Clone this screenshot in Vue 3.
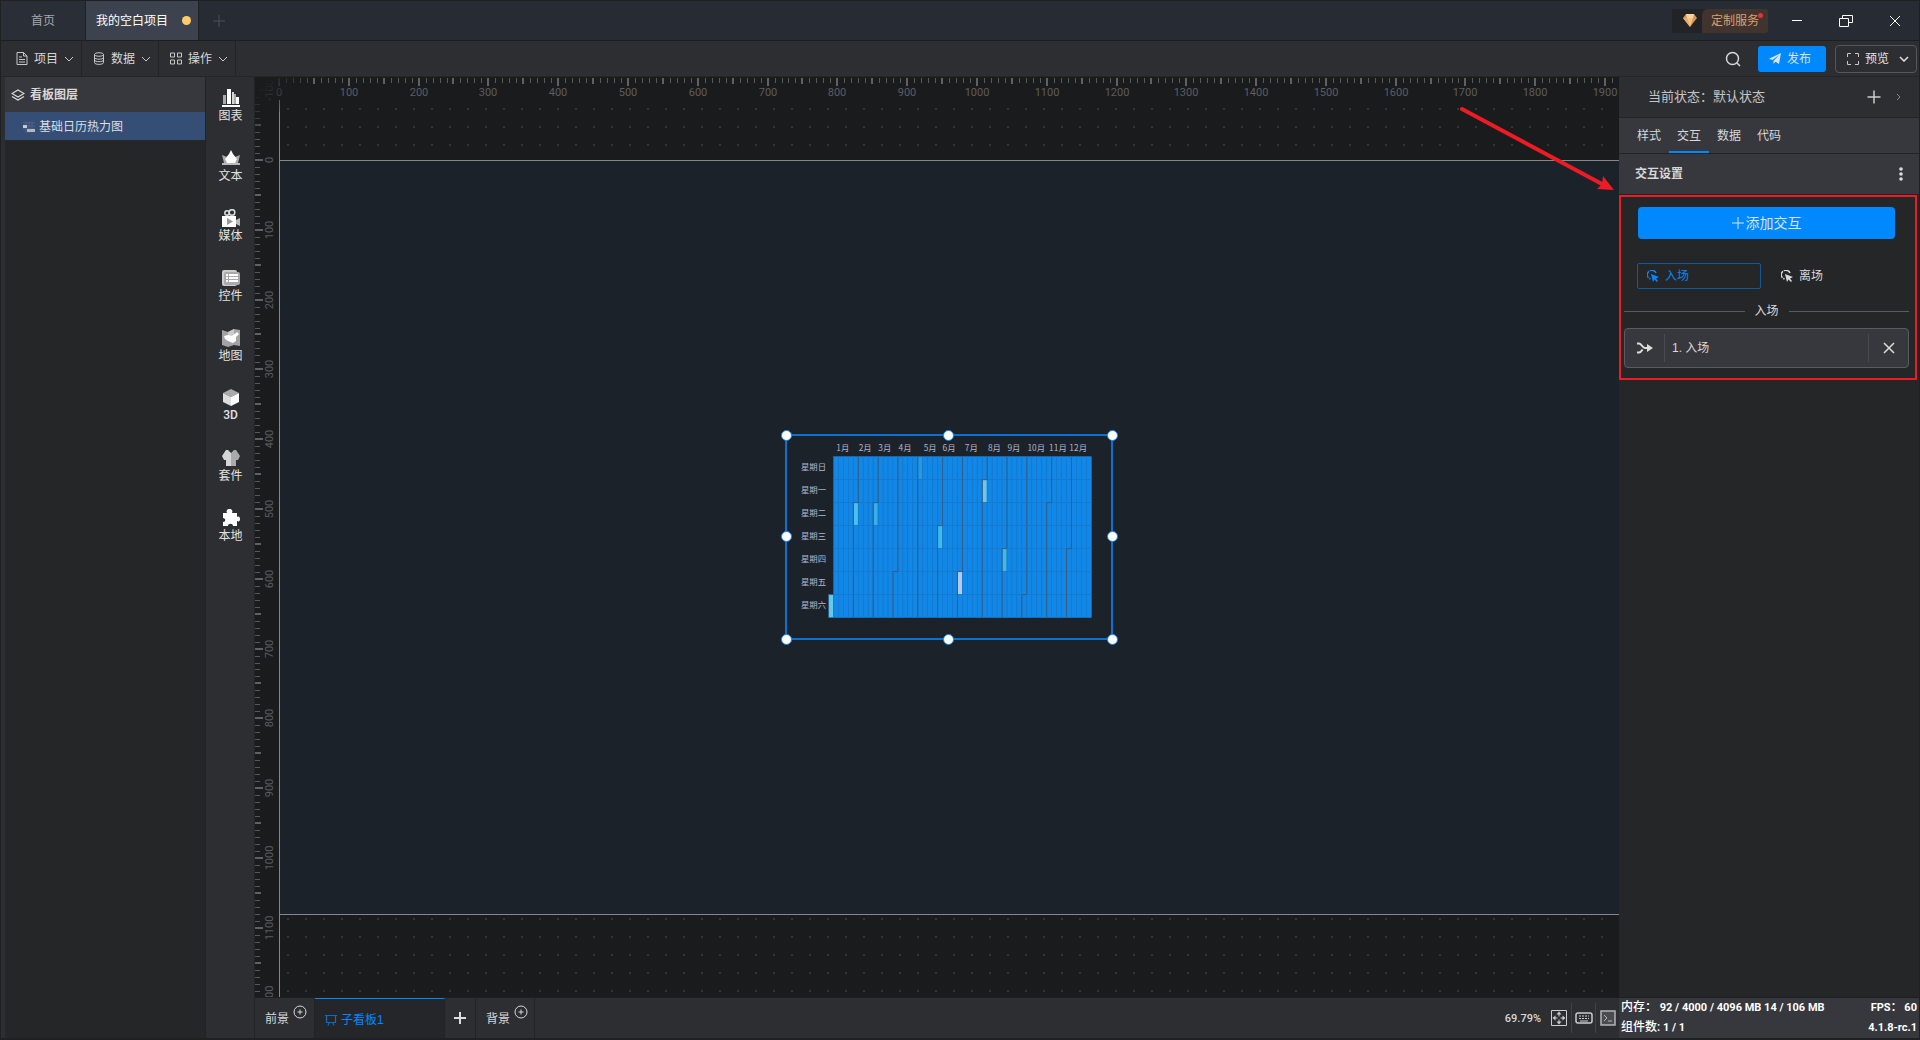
<script setup>
const SCALE = 0.69792
const ORIGIN_X = 24
const ORIGIN_Y = 83

function ticks(from, to, origin) {
  const out = []
  for (let v = from; v <= to; v += 10) {
    out.push({ v, p: Math.round(origin + v * SCALE), size: v % 100 === 0 ? 8 : v % 50 === 0 ? 6 : 5, major: v % 50 === 0 })
  }
  return out
}
const xTicks = ticks(0, 1920, ORIGIN_X)
const yTicks = ticks(-110, 1200, ORIGIN_Y)
const xLabels = xTicks.filter((t) => t.v % 100 === 0)
const yLabels = yTicks.filter((t) => t.v % 100 === 0)

const tools = ['图表', '文本', '媒体', '控件', '地图', '3D', '套件', '本地']
const menus = ['项目', '数据', '操作']
const handles = ['nw', 'n', 'ne', 'w', 'e', 'sw', 's', 'se']

const CW = 7.1
const CH = 32.9
const GX = 59.5
const GY = 29.5
const weekdays = ['星期日', '星期一', '星期二', '星期三', '星期四', '星期五', '星期六']
const hot = { 0: '#62c9ef', 1: '#49c1ee', 2: '#36b0ea', 4: '#2399e6', 5: '#40b9ec', 6: '#b6c9ec', 7: '#70c5ea', 8: '#40b9e6' }

const days = []
const months = []
for (let i = 0; i < 365; i++) {
  const date = new Date(Date.UTC(2022, 0, 1 + i))
  const col = Math.floor((i + 6) / 7)
  const row = (i + 6) % 7
  const x = GX + col * CW
  const y = GY + row * CH
  const m = date.getUTCMonth()
  const first = date.getUTCDate() === 1
  days.push({ x, y, fill: first && hot[m] ? hot[m] : '#1188e8' })
  if (first) {
    const bottom = GY + 7 * CH
    const line = row === 0
      ? `M${x} ${GY}V${bottom}`
      : `M${x + CW} ${GY}V${y}H${x}V${bottom}`
    months.push({ m, line })
  }
}
const labelX = [80, 112, 140, 169, 205, 232, 264, 297, 325, 357, 388, 417]
</script>

<template>
  <div class="app">
    <header class="titlebar">
      <nav class="tabs">
        <button class="tab home">首页</button>
        <button class="tab current">我的空白项目<i class="dirty"></i></button>
        <button class="tab add" aria-label="新建">
          <svg width="14" height="14" viewBox="0 0 14 14"><path d="M7 1v12M1 7h12" stroke="#4b4e56" fill="none" /></svg>
        </button>
      </nav>
      <div class="window">
        <button class="service">
          <span class="gem">
            <svg width="14" height="13" viewBox="0 0 14 13"><path d="M3 0h8l3 4-7 9L0 4z" fill="#d99555" /><path d="M3 0h8l-1 4H4z" fill="#f7d3a0" /><path d="M4 4h6l-3 9z" fill="#f3c388" /><path d="M0 4h4l3 9z" fill="#e8ad6d" /></svg>
          </span>
          <span class="service-text">定制服务<i></i></span>
        </button>
        <button class="win" aria-label="最小化"><svg width="14" height="14" viewBox="0 0 14 14"><path d="M2 6.500h10" /></svg></button>
        <button class="win" aria-label="还原"><svg width="16" height="14" viewBox="0 0 16 14"><path d="M1.500 4.500h9v8h-9zM4.500 4.500v-3h10v7h-4" /></svg></button>
        <button class="win" aria-label="关闭"><svg width="12" height="12" viewBox="0 0 12 12"><path d="M1 1l10 10M11 1L1 11" /></svg></button>
      </div>
    </header>

    <div class="toolbar">
      <button v-for="(name, i) in menus" :key="name" class="menu">
        <svg v-if="i === 0" class="line" width="12" height="13" viewBox="0 0 12 13"><path d="M1 .5h6.500L11 4v8.500H1zM7.500 .5V4H11M3 5h3M3 7.500h6M3 10h6" /></svg>
        <svg v-else-if="i === 1" class="line" width="12" height="13" viewBox="0 0 12 13"><ellipse cx="6" cy="2.500" rx="4.500" ry="1.800" /><path d="M1.500 2.500v8c0 2.500 9 2.500 9 0v-8M1.500 5.500c0 2.200 9 2.200 9 0M1.500 8c0 2.200 9 2.200 9 0" /></svg>
        <svg v-else class="line" width="12" height="13" viewBox="0 0 12 13"><path d="M.5 1h4v4h-4zM7.500 1h4v4h-4zM.5 8h4v4h-4zM7.500 8h4v4h-4z" /></svg>
        <span>{{ name }}</span>
        <svg class="line" width="10" height="6" viewBox="0 0 10 6"><path d="M1 1l4 4 4-4" /></svg>
      </button>
      <div class="actions">
        <button class="icon-btn" aria-label="搜索">
          <svg width="16" height="16" viewBox="0 0 16 16" fill="none" stroke="#d8d8d8" stroke-width="1.500"><circle cx="7.500" cy="7.500" r="6" /><path d="M12 12l3 3" /></svg>
        </button>
        <button class="publish">
          <svg width="12" height="12" viewBox="0 0 12 12"><path d="M12 0L10 11 6.500 8.800 4.500 11V8L10 2 3.500 7 0 5.800z" fill="#d6e4f4" /></svg>
          发布
        </button>
        <button class="preview">
          <svg width="12" height="12" viewBox="0 0 12 12" fill="none" stroke="#c8c8c8"><path d="M.5 4V.5H4M8 .5h3.500V4M11.500 8v3.500H8M4 11.500H.5V8" /></svg>
          <span>预览</span>
          <svg width="10" height="6" viewBox="0 0 10 6" fill="none" stroke="#e0e0e0" stroke-width="1.500"><path d="M1 1l4 4 4-4" /></svg>
        </button>
      </div>
    </div>

    <div class="body">
      <aside class="layers">
        <h2>
          <svg width="14" height="12" viewBox="0 0 14 12" fill="none" stroke="#ddd"><path d="M7 1l6 3.500L7 8 1 4.500zM1 7.500L7 11l6-3.500" stroke-width="1.200" /></svg>
          看板图层
        </h2>
        <button class="layer">
          <svg width="12" height="12" viewBox="0 0 12 12"><path d="M0 2h12M0 5h12M0 8h12M3 0v12M6 0v12M9 0v12" stroke="#4c6288" /><path d="M0 4h4v3H0z" fill="#c8cbd1" /><path d="M4 8h8v3H4z" fill="#b4b7be" /></svg>
          基础日历热力图
        </button>
      </aside>

      <nav class="tools">
        <button v-for="(name, i) in tools" :key="name" class="tool" :class="{ latin: name === '3D' }">
          <svg width="18" height="18" viewBox="0 0 18 18">
            <template v-if="i === 0"><path d="M1 6h3v9H1zM12 5h2v10h-2z" fill="#aaa" /><path d="M5 0h4v15H5zM0 16h18v2H0zM14 8h3v7h-3z" fill="#fff" /><path d="M10 3h2v12h-2z" fill="#d8d8d8" /></template>
            <template v-else-if="i === 1"><path d="M0 6l5 2 2 6H2zM18 6l-5 2-2 6h5z" fill="#aaa" /><path d="M9 1l2 4 4 5-2 4H5l-2-4 4-5z" fill="#fff" /><path d="M0 14h18v2H0z" fill="#bbb" /></template>
            <template v-else-if="i === 2"><g fill="none" stroke="#ddd" stroke-width="1.500"><circle cx="5" cy="4" r="2.200" /><circle cx="10" cy="3.500" r="2.800" /></g><path d="M0 7h14v11H0z" fill="#fff" /><path d="M5 9l6 3.500L5 16z" fill="#999" /><path d="M14 11l4-2v8l-4-2z" fill="#bbb" /></template>
            <template v-else-if="i === 3"><rect y="1" width="15" height="16" rx="2" fill="#ccc" /><rect x="2" y="3" width="16" height="13" rx="2" fill="#aaa" /><path d="M4 5h2v2H4zM7 5h9v2H7zM4 8h2v2H4zM7 8h9v2H7zM4 11h2v2H4zM7 11h9v2H7z" fill="#fff" /></template>
            <template v-else-if="i === 4"><path d="M0 1l6 2 6-3 6 1v16l-6-1-6 2-6-2z" fill="#a3a3a3" /><path d="M6 3l6-3v7H6z" fill="#ccc" /><path d="M2 7l4-1 4 1 5-4 2 2-3 3v4l-3 2-5-2-3-2z" fill="#fff" /></template>
            <template v-else-if="i === 5"><path d="M9 0l8 4-8 4-8-4z" fill="#aaa" /><path d="M1 4l8 4v9l-8-4z" fill="#ddd" /><path d="M17 4L9 8v9l8-4z" fill="#fff" /></template>
            <template v-else-if="i === 6"><path d="M4 1h2l3 3v13H4v-6L2 11 0 7z" fill="#d5d5d5" /><path d="M14 1h-2L9 4v13h5v-6l2 0 2-4z" fill="#aaa" /></template>
            <path v-else d="M1 4h4c-1-2 0-4 2.500-4S11 2 10 4h5v4c2-1 3 0 3 2s-1 3-3 2v5h-4c0-3-5-3-5 0H1v-4c3 0 3-4 0-4z" fill="#fff" />
          </svg>
          <span>{{ name }}</span>
        </button>
      </nav>

      <main class="work">
        <div class="stage">
          <svg class="board" width="100%" height="100%">
            <defs>
              <pattern id="dots" x="32" y="31" width="18" height="18" patternUnits="userSpaceOnUse"><rect width="2" height="2" fill="#333436" /></pattern>
              <linearGradient id="fade" gradientUnits="userSpaceOnUse" x1="8" y1="8" x2="34" y2="34"><stop offset="0" stop-color="#1a1b1d" /><stop offset="1" stop-color="#1a1b1d" stop-opacity="0" /></linearGradient>
            </defs>
            <rect x="25" y="25" width="100%" height="100%" fill="url(#dots)" />
            <rect x="25" y="84" width="100%" height="753" fill="#1c222a" />
            <path d="M24.500 23V1400M24 83.500H4000M24 837.500H4000" stroke="#85878a" />
            <g class="x">
              <line v-for="t in xTicks" :key="t.v" :x1="t.p" :x2="t.p" y1="1" :y2="t.size + 1" :class="{ major: t.major }" />
              <text v-for="t in xLabels" :key="t.v" :x="t.p" y="19">{{ t.v }}</text>
            </g>
            <g class="y">
              <line v-for="t in yTicks" :key="t.v" :y1="t.p" :y2="t.p" x1="0" :x2="t.size" :class="{ major: t.major }" />
              <text v-for="t in yLabels" :key="t.v" :transform="`translate(18 ${t.p}) rotate(-90)`">{{ t.v }}</text>
            </g>
            <path d="M0 0H60L0 60z" fill="url(#fade)" />
          </svg>

          <div class="selection">
            <svg class="heat" viewBox="0 0 464 289" width="324" height="202">
              <rect v-for="(d, i) in days" :key="i" :x="d.x" :y="d.y" :width="CW" :height="CH" :fill="d.fill" stroke="#157bd0" stroke-width="1" />
              <path v-for="m in months" :key="m.m" :d="m.line" fill="none" stroke="#3c5878" stroke-width="1.300" />
              <text v-for="(x, i) in labelX" :key="x" :x="x" y="21" text-anchor="middle">{{ i + 1 }}月</text>
              <text v-for="(w, i) in weekdays" :key="w" x="56" :y="GY + i * CH + 19" text-anchor="end">{{ w }}</text>
            </svg>
            <i v-for="h in handles" :key="h" class="handle" :class="h"></i>
          </div>

          <svg class="arrow" width="156" height="88" viewBox="0 0 156 88"><path d="M3 4l140 75" stroke="#ed1c24" stroke-width="4" stroke-linecap="round" /><path d="M155 85l-17-1 5-5 1-8z" fill="#ed1c24" /></svg>
        </div>

        <footer class="boards">
          <button class="bt front">前景<svg class="plus-circle" width="14" height="14" viewBox="0 0 14 14"><circle cx="7" cy="7" r="6" /><path d="M7 4.500v5M4.500 7h5" /></svg></button>
          <button class="bt sub"><svg width="12" height="12" viewBox="0 0 12 12" fill="none" stroke="#0b6cc4"><path d="M0 1.500h12M1.500 1.500v7h9v-7M4 9l-1 2.500M8 9l1 2.500" stroke-width="1.200" /></svg>子看板1</button>
          <button class="bt more" aria-label="添加看板"><svg width="12" height="12" viewBox="0 0 12 12"><path d="M6 0v12M0 6h12" stroke="#ddd" stroke-width="2" /></svg></button>
          <button class="bt back">背景<svg class="plus-circle" width="14" height="14" viewBox="0 0 14 14"><circle cx="7" cy="7" r="6" /><path d="M7 4.500v5M4.500 7h5" /></svg></button>
          <div class="view">
            <span class="zoom">69.79%</span>
            <button aria-label="适应画布"><svg width="16" height="16" viewBox="0 0 16 16" fill="none" stroke="#ccc"><path d="M.5 .5h15v15H.5zM8 3v3.500M8 9.500V13M3 8h3.500M9.500 8H13" /><path d="M8 1.500l2.500 3h-5zM8 14.500l2.500-3h-5zM1.500 8l3-2.500v5zM14.500 8l-3-2.500v5z" fill="#ccc" stroke="none" /></svg></button>
            <button aria-label="快捷键"><svg width="18" height="12" viewBox="0 0 18 12" fill="none" stroke="#ccc"><rect x="1" y="1" width="16" height="10" rx="2" stroke-width="1.500" /><path d="M4 4h10M4 6.500h10" stroke-dasharray="2 1" /><path d="M5 9h8" /></svg></button>
            <button aria-label="控制台"><svg width="16" height="16" viewBox="0 0 16 16" fill="#4b4c50" stroke="#b5b5b5"><path d="M1 1h14v14H1z" stroke-width="1.500" /><path d="M4 5l3 3-3 3M8 11h4" fill="none" /></svg></button>
          </div>
        </footer>
      </main>

      <aside class="props">
        <div class="state">
          <span>当前状态：默认状态</span>
          <button class="state-add" aria-label="添加状态"><svg width="14" height="14" viewBox="0 0 14 14"><path d="M7 .5v13M.5 7h13" stroke="#ccc" stroke-width="1.500" /></svg></button>
          <button aria-label="展开"><svg width="5" height="8" viewBox="0 0 5 8" fill="none" stroke="#888"><path d="M1 1l3 3-3 3" /></svg></button>
        </div>
        <nav class="ptabs">
          <button>样式</button><button class="on">交互</button><button>数据</button><button>代码</button>
        </nav>
        <h3>交互设置<button aria-label="更多"><svg width="4" height="16" viewBox="0 0 4 16" fill="#ddd"><circle cx="2" cy="3" r="1.800" /><circle cx="2" cy="8" r="1.800" /><circle cx="2" cy="13" r="1.800" /></svg></button></h3>
        <section class="interaction">
          <button class="add-int"><svg width="12" height="12" viewBox="0 0 12 12"><path d="M6 0v12M0 6h12" stroke="#d6e4f4" /></svg>添加交互</button>
          <div class="modes">
            <button v-for="(n, i) in ['入场', '离场']" :key="n" :class="{ on: i === 0 }">
              <svg width="12" height="12" viewBox="0 0 12 12"><path d="M9 3A4.500 4.500 0 1 0 3.500 9" fill="none" stroke="currentColor" stroke-width="1.500" stroke-dasharray="7 1" /><path d="M4 4l8 3-3 1.500 2 2.500-1 1-2.500-2.500L6 12z" fill="currentColor" /></svg>
              {{ n }}
            </button>
          </div>
          <div class="divider">入场</div>
          <div class="card">
            <span class="card-icon"><svg width="16" height="12" viewBox="0 0 16 12"><path d="M0 1.500h2C5 1.500 5 6 8 6h4M0 10.500h2c2 0 2.500-1.500 3.500-3" fill="none" stroke="#ddd" stroke-width="2" /><path d="M10 2l6 4-6 4z" fill="#ddd" /></svg></span>
            <span class="card-name">1. 入场</span>
            <button aria-label="删除"><svg width="12" height="12" viewBox="0 0 12 12"><path d="M1 1l10 10M11 1L1 11" stroke="#ddd" stroke-width="1.500" /></svg></button>
          </div>
          <div class="mark"></div>
        </section>
        <footer class="stats">
          <div><span><b>内存：</b> 92 / 4000 / 4096 MB 14 / 106 MB</span><span>FPS： 60</span></div>
          <div><span><b>组件数:</b> 1 / 1</span><span>4.1.8-rc.1</span></div>
        </footer>
      </aside>
    </div>
  </div>
</template>

<style>
body { background: #2d2e32; }
</style>

<style scoped>
* { box-sizing: border-box; }
.app {
  display: flex;
  flex-direction: column;
  min-height: 100vh;
  overflow: hidden;
  border: 1px solid #1f2022;
  border-width: 1px 1px 2px;
  background: #2d2e32;
  color: #d8d8d8;
  font: 12px/16px "Liberation Sans", "Noto Sans CJK SC", sans-serif;
}
button { padding: 0; border: 0; background: none; color: inherit; font: inherit; display: flex; align-items: center; }
svg { display: block; flex: none; }
h2, h3 { margin: 0; font-size: 12px; }

.titlebar { display: flex; justify-content: space-between; height: 40px; background: #272b33; border-bottom: 1px solid #1d1e20; }
.tabs { display: flex; }
.tab { height: 39px; border-right: 1px solid #1f2126; }
.home { width: 85px; justify-content: center; background: #292e37; color: #a8a8aa; }
.current { width: 113px; padding: 0 7px 0 10px; justify-content: space-between; background: #3d424f; color: #fff; }
.dirty { width: 9px; height: 9px; border-radius: 50%; background: #ffcc6a; }
.add { width: 40px; justify-content: center; border: 0; }
.window { display: flex; align-items: center; }
.service { height: 24px; border-radius: 2px; overflow: hidden; background: #222326; color: #d9a06f; margin-right: 4px; }
.gem { width: 30px; display: flex; justify-content: center; padding-left: 6px; }
.service-text { position: relative; line-height: 24px; padding: 0 9px; background: #41342e; border-radius: 6px 0 0 0; }
.service-text i { position: absolute; top: 4px; right: 5px; width: 5px; height: 5px; border-radius: 50%; background: #d9363e; }
.win { width: 49px; height: 39px; justify-content: center; }
.win svg { fill: none; stroke: #fff; }

.toolbar { display: flex; height: 36px; border-bottom: 1px solid #242528; }
.menu { width: 77px; gap: 6px; padding-left: 11px; border-right: 1px solid #222326; }
.menu:first-child { width: 81px; padding-left: 15px; }
.line { fill: none; stroke: #c8c8c8; }
.actions { display: flex; align-items: center; margin-left: auto; padding-right: 2px; }
.icon-btn { width: 16px; margin-right: 17px; }
.publish { width: 68px; height: 26px; border-radius: 3px; padding-left: 11px; gap: 6px; background: #0088ff; color: #d6e4f4; }
.preview { width: 82px; height: 28px; margin-left: 9px; padding: 0 6px 0 11px; border: 1px solid #55565a; border-radius: 4px; gap: 6px; color: #e4e4e4; }
.preview span { margin-right: 4px; }

.body { display: flex; flex: 1; }
.layers { width: 201px; margin-left: 4px; background: #252628; border-right: 1px solid #222326; }
.layers h2 { display: flex; align-items: center; gap: 5px; height: 35px; padding-left: 6px; background: #37383d; color: #d8d8d8; }
.layer { width: 100%; height: 28px; gap: 4px; padding: 2px 0 0 18px; background: #354e75; color: #dcdfe4; }
.tools { display: flex; flex-direction: column; width: 49px; padding: 8px 0 0 1px; border-right: 1px solid #222326; }
.tool { flex-direction: column; height: 60px; padding-top: 4px; gap: 1px; color: #e2e2e2; }
.latin { gap: 0; font-family: Roboto, sans-serif; font-weight: 500; }

.work { flex: 1; display: flex; flex-direction: column; min-width: 0; }
.stage { position: relative; flex: 1; overflow: hidden; background: #1a1b1d; }
.board { position: absolute; inset: 0; }
.board text { font: 11px "Liberation Sans Narrow", Roboto, sans-serif; fill: #5d5d60; text-anchor: middle; }
.board line { stroke: #58595b; stroke-width: 1px; shape-rendering: crispEdges; }
.board .major { stroke: #616163; stroke-width: 2px; }
.selection { position: absolute; left: 530px; top: 357px; border: 2px solid #0a72d0; }
.heat text { font: 12px "Noto Sans CJK SC", sans-serif; fill: #b2b5cc; }
.handle { position: absolute; width: 11px; height: 11px; margin: -6px; border: 1px solid #0a84f5; border-radius: 50%; background: #fff; top: 50%; left: 50%; }
.nw, .n, .ne { top: 0; }
.sw, .s, .se { top: 100%; margin-top: -4px; }
.nw, .w, .sw { left: 0; }
.ne, .e, .se { left: 100%; margin-left: -4px; }
.arrow { position: absolute; right: 4px; top: 28px; fill: none; }

.boards { display: flex; height: 41px; border-top: 1px solid #1d1e20; }
.bt { padding-top: 2px; border-right: 1px solid #222326; }
.front { width: 60px; padding-left: 10px; }
.back { width: 59px; padding-left: 10px; }
.plus-circle { fill: none; stroke: #d8d8d8; margin: 0 0 14px 4px; }
.sub { width: 130px; padding-left: 10px; gap: 4px; border-top: 1px solid #0088ff; background: #252629; color: #0088ff; }
.more { width: 31px; padding: 0; justify-content: center; }
.view { display: flex; align-items: center; margin-left: auto; }
.zoom { font: 11px Roboto, sans-serif; font-weight: 500; margin-right: 6px; }
.view button { width: 24px; height: 30px; justify-content: center; border-left: 1px solid #414246; }
.view .zoom + button { border: 0; }

.props { display: flex; flex-direction: column; width: 300px; background: #252628; }
.state { display: flex; align-items: center; height: 41px; padding: 0 18px 0 29px; background: #2d2e32; border-bottom: 1px solid #222326; font-size: 13px; color: #c4c4c4; }
.state-add { margin: 0 15px 0 auto; }
.ptabs { display: flex; height: 36px; padding-left: 10px; background: #37383d; border-bottom: 1px solid #222326; }
.ptabs button { width: 40px; justify-content: center; border-bottom: 2px solid transparent; border-top: 2px solid transparent; }
.ptabs .on { border-bottom-color: #0088ff; }
.props h3 { display: flex; justify-content: space-between; align-items: center; height: 41px; padding: 0 16px; background: #37383d; border-bottom: 1px solid #222326; }
.interaction { position: relative; padding: 12px 10px 12px 5px; }
.add-int { width: 257px; height: 32px; margin-left: 14px; justify-content: center; gap: 2px; border-radius: 4px; background: #0088ff; color: #d6e4f4; font-size: 14px; }
.modes { display: flex; gap: 10px; margin: 24px 0 0 13px; }
.modes button { width: 124px; height: 26px; gap: 6px; padding-left: 9px; border: 1px solid transparent; border-radius: 2px; }
.modes .on { border-color: #10599c; color: #0088ff; }
.divider { display: flex; align-items: center; gap: 10px; margin: 14px 0 9px; }
.divider::before, .divider::after { content: ""; flex: 1; height: 1px; background: #5a5b5e; }
.card { display: flex; align-items: center; height: 40px; border: 1px solid #5b5c61; border-radius: 4px; background: #37383d; }
.card-icon, .card button { display: flex; justify-content: center; align-items: center; width: 40px; height: 28px; border: 0 solid #4a4b50; }
.card-icon { border-right-width: 1px; }
.card button { border-left-width: 1px; }
.card-name { flex: 1; padding-left: 7px; }
.mark { position: absolute; inset: 0 2px 0 0; border: 2px solid #ed1c24; }
.stats { margin-top: auto; height: 41px; padding: 0 2px; background: #37383d; border-top: 1px solid #1d1e20; color: #fff; font: bold 11px/20px Roboto, "Noto Sans CJK SC", sans-serif; }
.stats b { font-size: 12px; font-weight: 500; line-height: 16px; }
.stats div { display: flex; justify-content: space-between; height: 20px; }
</style>
